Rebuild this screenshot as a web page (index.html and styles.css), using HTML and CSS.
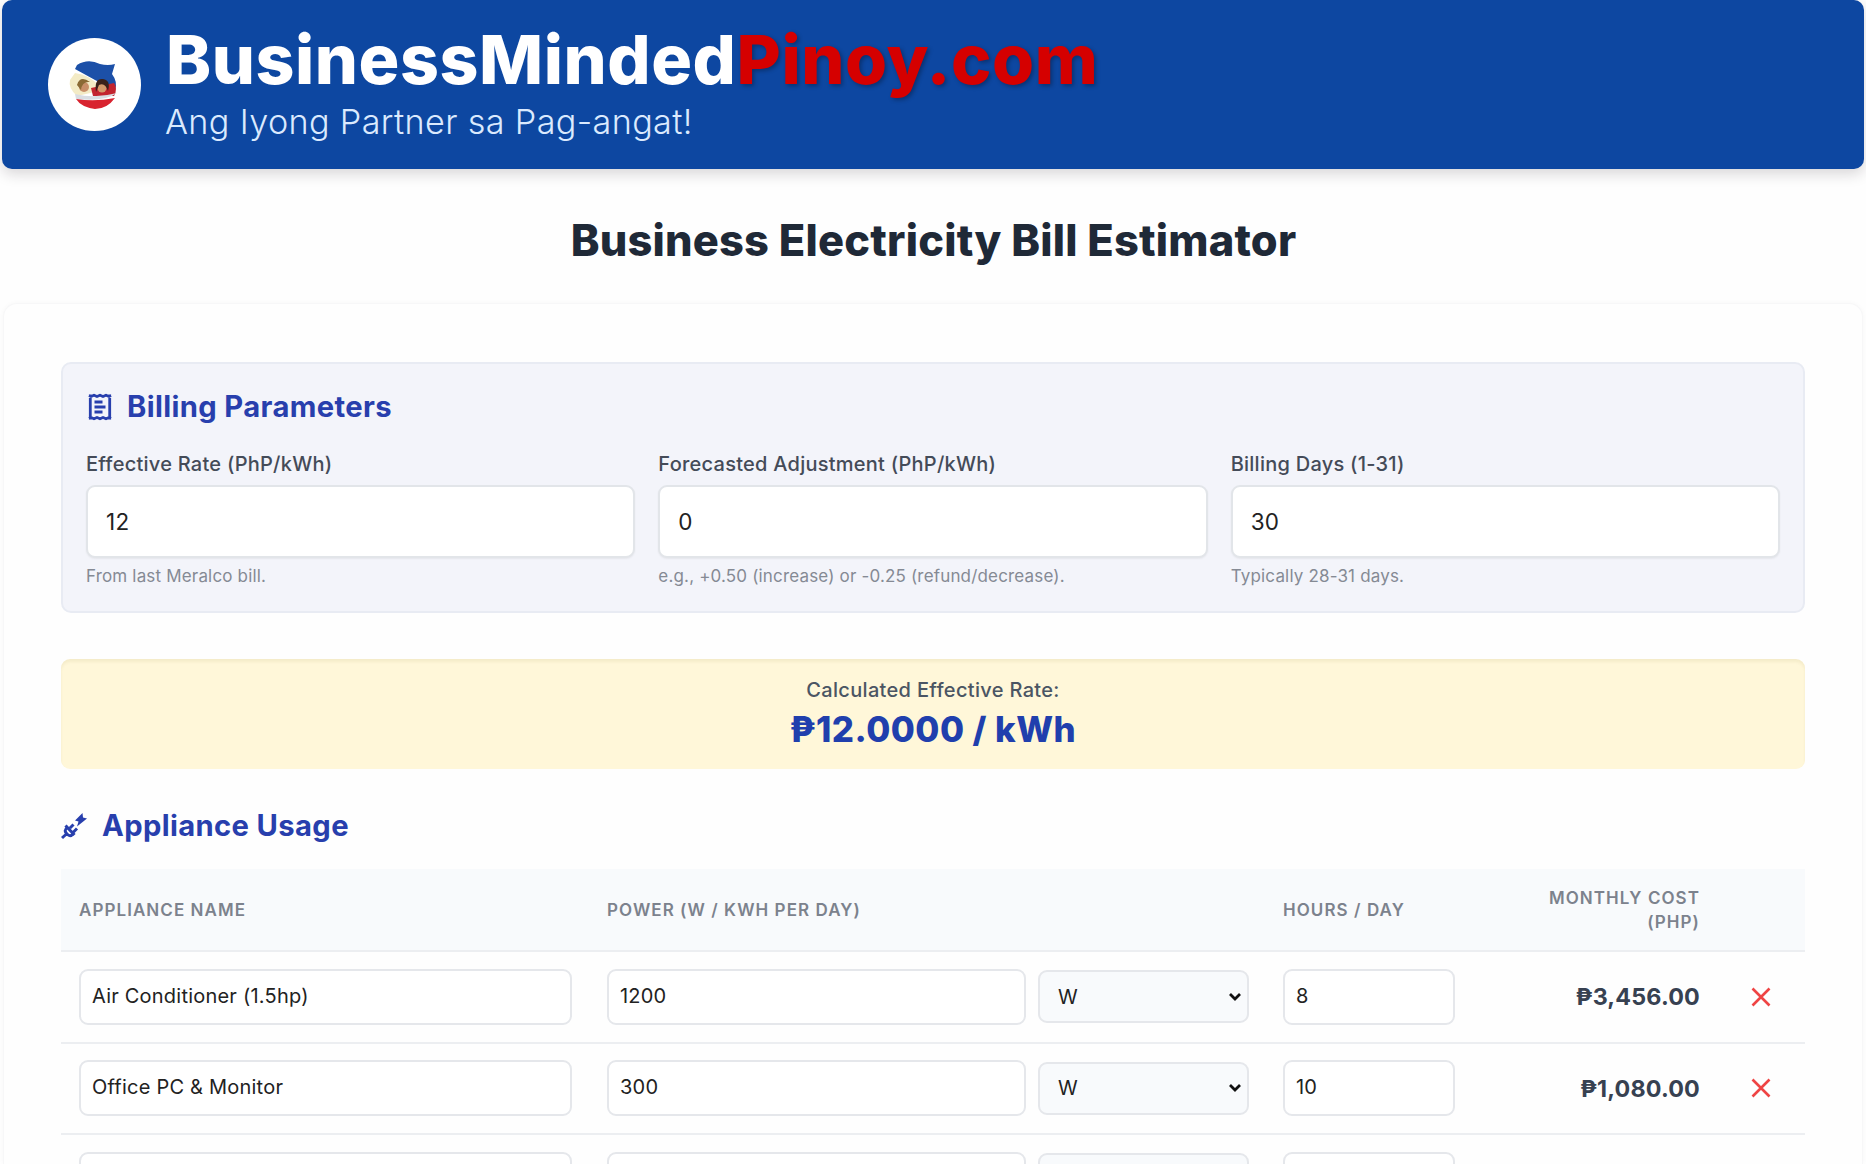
FILE: index.html
```html
<!DOCTYPE html>
<html lang="en">
<head>
<meta charset="utf-8">
<title>Business Electricity Bill Estimator</title>
<link rel="stylesheet" href="styles.css">
</head>
<body>
<header class="banner">
  <div class="logo">
    <svg viewBox="0 0 94 94" width="94" height="94">
      <path d="M29 27 Q40 20 52 26 Q60 28 67 26 L64 36 Q70 44 67 52 L47 42 L27 31 Z" fill="#1c50a8"/>
      <path d="M27 35 Q39 37 46 43 L56 52 L29 58 Q20 50 22 42 Z" fill="#f3ebc6"/>
      <path d="M43 50 L66 45 Q70 51 66 58 L45 58 Z" fill="#c3242f"/>
      <circle cx="36" cy="49" r="5" fill="#c88f69"/>
      <path d="M29 47 Q32 37 42 44 Q34 43 33 52 Z" fill="#8a6a35"/>
      <circle cx="54" cy="50" r="4.5" fill="#d39a6c"/>
      <path d="M48 54 Q46 40 55 41 Q63 42 60 53 Q57 44 51 47 Z" fill="#3a211b"/>
      <path d="M27 56 Q47 61 69 55 Q57 64 28 61 Z" fill="#d9dde2"/>
      <path d="M28 61 Q47 64 67 60 Q59 71 47 71 Q33 69 28 61 Z" fill="#d8232f"/>
    </svg>
  </div>
  <div class="brand">
    <div class="brand-name">BusinessMinded<span class="brand-accent">Pinoy.com</span></div>
    <div class="tagline">Ang Iyong Partner sa Pag-angat!</div>
  </div>
</header>
<h1 class="page-title">Business Electricity Bill Estimator</h1>
<main class="card">
  <section class="billing">
    <h2 class="section-title">
      <svg class="receipt-icon" viewBox="0 0 24 28" width="24" height="28" fill="none" stroke="currentColor" stroke-width="2.8"><path d="M2.300 1.500V26.500M21.700 1.500V26.500M1 2.500l2 1 3-1.200 3 1.200 3-1.200 3 1.200 3-1.200 3 1.200 2-1M1 25.500l2-1 3 1.200 3-1.200 3 1.200 3-1.200 3 1.200 3-1.200 2 1M6.500 9h8M6.500 14h11M6.500 19h8"/></svg>
      <span>Billing Parameters</span>
    </h2>
    <div class="fields">
      <div class="field"><label class="label" for="rate">Effective Rate (PhP/kWh)</label><input class="input" id="rate" value="12"><p class="hint">From last Meralco bill.</p></div>
      <div class="field"><label class="label" for="adj">Forecasted Adjustment (PhP/kWh)</label><input class="input" id="adj" value="0"><p class="hint">e.g., +0.50 (increase) or -0.25 (refund/decrease).</p></div>
      <div class="field"><label class="label" for="days">Billing Days (1-31)</label><input class="input" id="days" value="30"><p class="hint">Typically 28-31 days.</p></div>
    </div>
  </section>
  <section class="rate">
    <p class="rate-label">Calculated Effective Rate:</p>
    <p class="rate-value">₱12.0000 / kWh</p>
  </section>
  <h2 class="section-title usage-title">
    <svg class="plug-icon" viewBox="0 0 26 28" width="26" height="28" fill="none" stroke="currentColor" stroke-width="3"><path d="M1 26l5-4.500M4.500 13.500l9 9.500M6.500 15.500C3 18 4 20 6 22s4 2.500 6.500-.5M9 16l3.500-3.500M12.500 20l3.500-3.500"/><path d="M21.500 1L14 8.500l3.500 1L16 14.500l10-8-4-1Z" fill="currentColor" stroke="none"/></svg>
    <span>Appliance Usage</span>
  </h2>
  <div class="table">
    <div class="row head"><span>Appliance Name</span><span>Power (W / kWh per day)</span><span>Hours / Day</span><span class="cost-head">Monthly Cost (PhP)</span><span></span></div>
    <div class="row">
      <input class="cell-input" value="Air Conditioner (1.5hp)">
      <div class="power"><input class="cell-input" value="1200"><div class="unit"><span>W</span><svg viewBox="0 0 14 10" width="14" height="10"><path d="M2 2l5 5 5-5" fill="none" stroke="#111" stroke-width="2.800"/></svg></div></div>
      <input class="cell-input" value="8"><span class="cost">₱3,456.00</span>
      <button class="remove" aria-label="Remove"><svg viewBox="0 0 20 20" width="20" height="20"><path d="M1.500 1.500l17 17M18.500 1.500l-17 17" stroke="#ef4444" stroke-width="2.600"/></svg></button>
    </div>
    <div class="row">
      <input class="cell-input" value="Office PC &amp; Monitor">
      <div class="power"><input class="cell-input" value="300"><div class="unit"><span>W</span><svg viewBox="0 0 14 10" width="14" height="10"><path d="M2 2l5 5 5-5" fill="none" stroke="#111" stroke-width="2.800"/></svg></div></div>
      <input class="cell-input" value="10"><span class="cost">₱1,080.00</span>
      <button class="remove" aria-label="Remove"><svg viewBox="0 0 20 20" width="20" height="20"><path d="M1.500 1.500l17 17M18.500 1.500l-17 17" stroke="#ef4444" stroke-width="2.600"/></svg></button>
    </div>
    <div class="row">
      <input class="cell-input">
      <div class="power"><input class="cell-input"><div class="unit"></div></div>
      <input class="cell-input"><span></span><span></span>
    </div>
  </div>
</main>
</body>
</html>
```
FILE: styles.css
```css
* { box-sizing: border-box; }
html { overflow: hidden; }
body { display: flex; flex-direction: column; margin: 0; height: 1164px; overflow: hidden; background: #fefefe; font-family: Inter, "Liberation Sans", sans-serif; color: #1f2937; }
p, h1, h2 { margin: 0; }
input, button { font: inherit; color: #222; }
.banner { display: flex; flex: none; align-items: center; height: 169px; margin: 0 2px; padding-left: 46px; border-radius: 10px; background: #0d47a1; box-shadow: 0 5px 14px rgba(30, 20, 30, .17); }
.logo { width: 93px; height: 93px; border-radius: 50%; background: #fff; overflow: hidden; }
.brand { margin: -5px 0 0 24px; }
.brand-name { font-size: 68px; line-height: 72px; font-weight: 800; letter-spacing: .55px; color: #fff; white-space: nowrap; margin: 4px 0 0 1px; }
.brand-accent { color: #d50000; text-shadow: 2px 2px 4px rgba(0, 0, 0, .3); }
.tagline { margin-top: 3px; font-size: 34.2px; line-height: 48px; font-weight: 300; letter-spacing: .35px; color: #dbeafe; }
.page-title { margin: 45px 0 0 1px; font-size: 43.4px; line-height: 52px; font-weight: 800; letter-spacing: .2px; text-align: center; }
.card { flex: 1; min-height: 0; overflow: hidden; margin: 37px 3px 0; padding: 58px 57px 0; border: 1px solid #f7f7f8; border-bottom: 0; border-radius: 14px 14px 0 0; box-shadow: 0 0 5px rgba(0, 0, 0, .03); background: #fefefe; }
.billing { height: 251px; padding: 25px 23px 0; border: 2px solid #e8ebf3; border-radius: 10px; background: #f3f4fa; }
.section-title { display: flex; align-items: center; gap: 15px; font-size: 29.2px; line-height: 36px; font-weight: 700; letter-spacing: .36px; color: #283fad; }
.fields { display: grid; grid-template-columns: repeat(3, 1fr); gap: 23px; margin-top: 27px; }
.receipt-icon { margin-left: 2px; }
.label { display: block; font-size: 20px; line-height: 24px; font-weight: 500; letter-spacing: .25px; color: #444b58; }
.input { display: block; width: 100%; height: 73px; margin-top: 9px; padding: 0 18px; border: 2px solid #e2e5e9; border-radius: 9px; background: #fff; font-size: 22.5px; letter-spacing: .3px; box-shadow: 0 1px 2px rgba(0, 0, 0, .06); }
.hint { margin-top: 7px; font-size: 17px; line-height: 22px; letter-spacing: .17px; color: #858a94; }
.rate { height: 110px; margin-top: 46px; padding-top: 18px; border-radius: 9px; background: #fff7d9; box-shadow: inset 0 3px 3px rgba(120, 100, 0, .07); text-align: center; }
.rate-label { font-size: 20px; line-height: 26px; font-weight: 500; letter-spacing: .33px; color: #4b5563; }
.rate-value { margin-top: 5px; font-size: 34.8px; line-height: 42px; font-weight: 800; letter-spacing: .5px; color: #203fad; }
.usage-title { margin-top: 39px; }
.table { margin-top: 25px; }
.row { display: grid; grid-template-columns: 493px 677px 207px 244px 121px; align-items: center; height: 91.5px; padding-left: 18px; border-bottom: 2px solid #eceef1; }
.row > :nth-child(2) { margin-left: 35px; }
.row > :nth-child(3) { margin-left: 34px; }
.row.head { height: 83px; padding-top: 2px; background: #f8fafc; font-size: 17px; line-height: 23.5px; font-weight: 600; letter-spacing: 1.06px; color: #7c828d; text-transform: uppercase; }
.cost-head { width: 160px; justify-self: end; text-align: right; }
.cell-input { width: 100%; min-width: 0; height: 56px; padding: 0 11px 2px; border: 2px solid #e5e7eb; border-radius: 9px; background: #fff; font-size: 20px; letter-spacing: .22px; }
.row > input:nth-child(3) { width: 172px; }
.power { display: grid; grid-template-columns: 419px 211px; gap: 12px; align-items: center; }
.unit { display: flex; align-items: center; justify-content: space-between; height: 53px; padding: 0 5px 0 18px; border: 2px solid #e5e7eb; border-radius: 9px; background: #f8fafc; font-size: 20px; color: #222; }
.cost { text-align: right; font-size: 23.3px; font-weight: 700; letter-spacing: .18px; color: #374151; }
.remove { display: flex; justify-self: center; padding: 0; border: 0; background: none; }
```
